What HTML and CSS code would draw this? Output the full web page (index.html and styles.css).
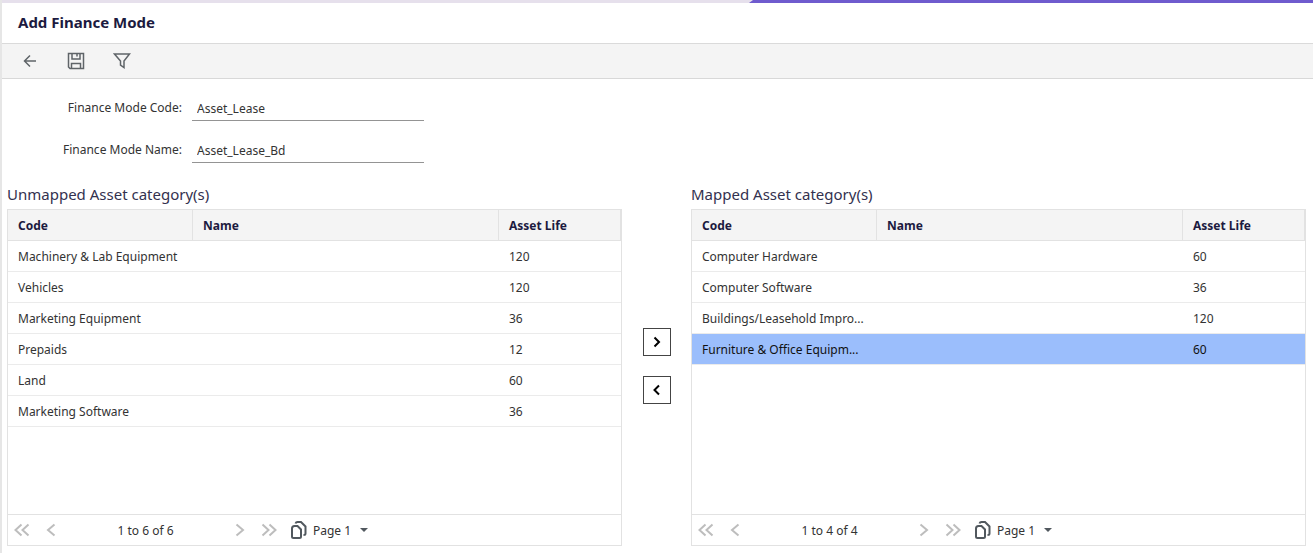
FILE: index.html
```html
<!DOCTYPE html>
<html lang="en">
<head>
<meta charset="utf-8">
<title>Add Finance Mode</title>
<link rel="stylesheet" href="styles.css">
</head>
<body>
<svg class="sprite" aria-hidden="true">
  <symbol id="chev-left" viewBox="0 0 10 14"><path d="M8.500 1.500 2 7l6.500 5.500"/></symbol>
  <symbol id="chev-right" viewBox="0 0 10 14"><path d="M1.500 1.500 8 7l-6.500 5.500"/></symbol>
  <symbol id="chev-first" viewBox="0 0 16 14"><path d="M7.500 1.500 1.500 7l6 5.500M14.500 1.500 8.500 7l6 5.500"/></symbol>
  <symbol id="chev-last" viewBox="0 0 16 14"><path d="M1.500 1.500 7.500 7l-6 5.500M8.500 1.500 14.500 7l-6 5.500"/></symbol>
  <symbol id="pages" viewBox="0 0 16 18"><path d="M1 7.500Q1 5 3.500 5H6.500L10 8.500V15.500Q10 17 8.500 17H2.500Q1 17 1 15.500ZM4.500 2.500Q5 1 6.500 1H10L14.500 5.500V12.500Q14.500 14 12.500 14"/></symbol>
</svg>
<div class="page">
  <div class="topbar"><svg class="topbar-accent" viewBox="0 0 6 3" aria-hidden="true"><path d="M0 3 4 0H6V3Z"/></svg><div class="topbar-fill"></div></div>
  <header class="title-bar"><h1 class="title">Add Finance Mode</h1></header>
  <div class="toolbar" role="toolbar" aria-label="Actions">
    <button class="tool" type="button" aria-label="Back"><svg width="18" height="18" viewBox="0 0 18 18"><path d="M9 3.500 3.500 9 9 14.500M3.500 9H15"/></svg></button>
    <button class="tool" type="button" aria-label="Save"><svg width="18" height="18" viewBox="0 0 18 18"><path d="M1.500 1.500H16.500V16.500H3L1.500 15ZM5 1.500V7H13V1.500M4.500 16.500V11.500H13.500V16.500M10 2V4.500"/></svg></button>
    <button class="tool" type="button" aria-label="Filter"><svg width="18" height="18" viewBox="0 0 18 18"><path d="M1.500 2H16.500L11 9V15.500L7.500 13V9Z"/></svg></button>
  </div>
  <main class="content">
    <form class="fields">
      <label class="field-label" for="code">Finance Mode Code:</label>
      <input class="field-input" id="code" type="text" value="Asset_Lease">
      <label class="field-label" for="name">Finance Mode Name:</label>
      <input class="field-input" id="name" type="text" value="Asset_Lease_Bd">
    </form>
    <div class="mapping">
      <section class="panel">
        <h2 class="panel-title">Unmapped Asset category(s)</h2>
        <div class="grid">
          <div class="grid-body">
            <table class="table">
              <colgroup><col class="col-code"><col><col class="col-life"></colgroup>
              <thead><tr><th>Code</th><th>Name</th><th>Asset Life</th></tr></thead>
              <tbody>
                <tr><td>Machinery &amp; Lab Equipment</td><td></td><td>120</td></tr>
                <tr><td>Vehicles</td><td></td><td>120</td></tr>
                <tr><td>Marketing Equipment</td><td></td><td>36</td></tr>
                <tr><td>Prepaids</td><td></td><td>12</td></tr>
                <tr><td>Land</td><td></td><td>60</td></tr>
                <tr><td>Marketing Software</td><td></td><td>36</td></tr>
              </tbody>
            </table>
          </div>
          <nav class="pager" aria-label="Unmapped pages">
            <button class="page-btn wide" type="button" aria-label="First"><svg width="16" height="14"><use href="#chev-first"/></svg></button>
            <button class="page-btn" type="button" aria-label="Previous"><svg width="10" height="14"><use href="#chev-left"/></svg></button>
            <span class="range">1 to 6 of 6</span>
            <button class="page-btn" type="button" aria-label="Next"><svg width="10" height="14"><use href="#chev-right"/></svg></button>
            <button class="page-btn wide" type="button" aria-label="Last"><svg width="16" height="14"><use href="#chev-last"/></svg></button>
            <label class="page-pick"><svg class="pages-icon" width="16" height="18" aria-hidden="true"><use href="#pages"/></svg><select class="page-select" aria-label="Page"><option>Page 1</option></select><span class="caret"></span></label>
          </nav>
        </div>
      </section>
      <div class="movers">
        <button class="move" type="button" aria-label="Map"><svg width="8" height="12" viewBox="0 0 8 12"><path d="M1.500 1.500 6 6 1.500 10.500"/></svg></button>
        <button class="move" type="button" aria-label="Unmap"><svg width="8" height="12" viewBox="0 0 8 12"><path d="M6 1.500 1.500 6 6 10.500"/></svg></button>
      </div>
      <section class="panel">
        <h2 class="panel-title">Mapped Asset category(s)</h2>
        <div class="grid">
          <div class="grid-body">
            <table class="table">
              <colgroup><col class="col-code"><col><col class="col-life"></colgroup>
              <thead><tr><th>Code</th><th>Name</th><th>Asset Life</th></tr></thead>
              <tbody>
                <tr><td>Computer Hardware</td><td></td><td>60</td></tr>
                <tr><td>Computer Software</td><td></td><td>36</td></tr>
                <tr><td>Buildings/Leasehold Impro...</td><td></td><td>120</td></tr>
                <tr class="selected"><td>Furniture &amp; Office Equipm...</td><td></td><td>60</td></tr>
              </tbody>
            </table>
          </div>
          <nav class="pager" aria-label="Mapped pages">
            <button class="page-btn wide" type="button" aria-label="First"><svg width="16" height="14"><use href="#chev-first"/></svg></button>
            <button class="page-btn" type="button" aria-label="Previous"><svg width="10" height="14"><use href="#chev-left"/></svg></button>
            <span class="range">1 to 4 of 4</span>
            <button class="page-btn" type="button" aria-label="Next"><svg width="10" height="14"><use href="#chev-right"/></svg></button>
            <button class="page-btn wide" type="button" aria-label="Last"><svg width="16" height="14"><use href="#chev-last"/></svg></button>
            <label class="page-pick"><svg class="pages-icon" width="16" height="18" aria-hidden="true"><use href="#pages"/></svg><select class="page-select" aria-label="Page"><option>Page 1</option></select><span class="caret"></span></label>
          </nav>
        </div>
      </section>
    </div>
  </main>
</div>
</body>
</html>
```
FILE: styles.css
```css
* { box-sizing: border-box; }
body {
  margin: 0;
  background: #fff;
  color: #333;
  font: 12px/18px "Noto Sans", "Open Sans", sans-serif;
}
button, input, select { font: inherit; color: inherit; }
button { padding: 0; border: 0; background: none; cursor: pointer; }
svg { display: block; fill: none; }
.sprite { position: absolute; width: 0; height: 0; }
.page {
  display: flex;
  flex-direction: column;
  min-height: 100vh;
  border-left: 2px solid #e6e6e6;
}
.topbar { display: flex; height: 3px; background: #e6e0ec; justify-content: flex-end; }
.topbar-accent { width: 6px; height: 3px; fill: #6f5bce; }
.topbar-fill { width: 43%; margin-right: -6px; background: #6f5bce; }
.title-bar { padding: 7px 16px 9px; border-bottom: 1px solid #dadada; }
.title { margin: 0; font-size: 15px; line-height: 24px; font-weight: 700; color: #1c1a40; }
.toolbar {
  display: flex;
  gap: 28px;
  padding: 8px 19px;
  background: #f4f4f4;
  border-bottom: 1px solid #d8d8d8;
}
.tool { stroke: #5f6468; stroke-width: 1.5; }
.content { display: flex; flex-direction: column; flex: 1; padding: 18px 7px 7px 5px; }
.fields {
  display: grid;
  grid-template-columns: 175px 232px;
  gap: 18px 10px;
}
.field-label { padding-top: 2px; text-align: right; }
.field-input {
  width: 100%;
  height: 24px;
  padding: 0 5px;
  border: 0;
  border-bottom: 1px solid #949494;
  border-radius: 0;
  background: none;
  outline: 0;
}
.mapping { display: flex; flex: 1; margin-top: 19px; }
.panel { display: flex; flex: 1; flex-direction: column; min-width: 0; }
.panel-title { margin: 0; padding-bottom: 3px; font-size: 15px; line-height: 24px; font-weight: 400; color: #33314f; }
.grid { display: flex; flex: 1; flex-direction: column; border: 1px solid #e2e2e2; }
.grid-body { flex: 1; }
.table { width: 100%; table-layout: fixed; border-collapse: separate; border-spacing: 0; }
.col-code { width: 185px; }
.col-life { width: 122px; }
.table th, .table td {
  height: 31px;
  padding: 1px 10px 0;
  border-bottom: 1px solid #ebebeb;
  text-align: left;
  white-space: nowrap;
}
.table th {
  background: #f4f4f4;
  border-right: 1px solid #e2e2e2;
  border-bottom-color: #e2e2e2;
  font-weight: 700;
  color: #1c1a40;
}
.selected td { background: #9bbefc; color: #111; }
.pager { display: flex; align-items: center; height: 31px; padding: 0 6px; border-top: 1px solid #e2e2e2; }
.page-btn { width: 10px; stroke: #bdbdbd; stroke-width: 2; }
.page-btn.wide { width: 16px; }
.page-btn + .page-btn { margin-left: 16px; }
.range { width: 179px; padding-top: 1px; text-align: center; }
.page-pick { display: flex; align-items: center; margin-left: 14px; }
.pages-icon { stroke: #51585e; stroke-width: 2; }
.page-select { appearance: none; margin-left: 6px; padding: 1px 0 0; border: 0; background: none; width: 47px; }
.caret { border: 4px solid transparent; border-top-color: #51585e; border-bottom: 0; }
.movers {
  display: flex;
  flex-direction: column;
  align-items: center;
  gap: 20px;
  width: 69px;
  padding-top: 146px;
}
.move {
  display: grid;
  place-items: center;
  width: 28px;
  height: 28px;
  border: 1px solid #444;
  background: #fff;
  stroke: #000;
  stroke-width: 2;
}
```
